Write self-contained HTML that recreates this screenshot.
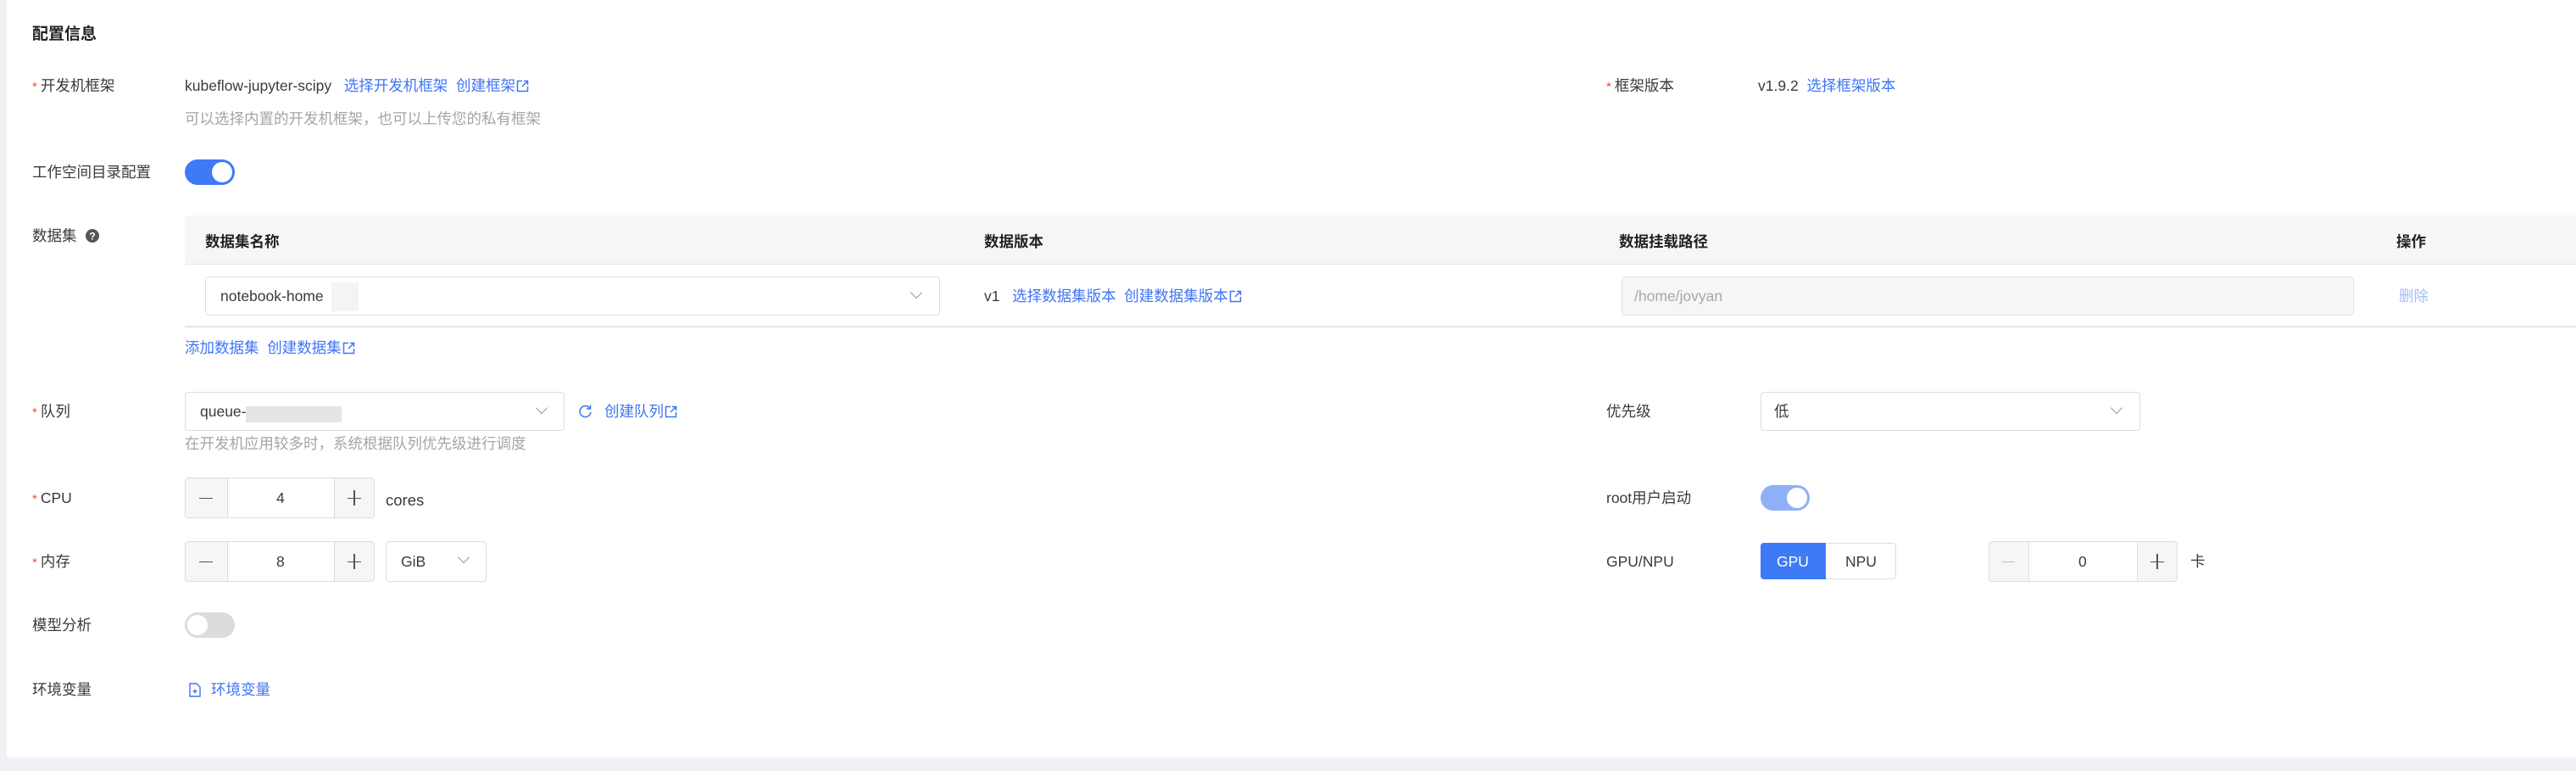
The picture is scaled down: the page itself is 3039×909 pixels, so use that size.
<!DOCTYPE html>
<html><head><meta charset="utf-8"><style>
*{margin:0;padding:0;box-sizing:border-box}
body{width:3039px;height:909px;background:#fff;position:relative;overflow:hidden;font-family:"Liberation Sans","Noto Sans CJK SC",sans-serif;color:#3a3a3a;font-size:17.5px}
.t{position:absolute;white-space:nowrap;line-height:24px}
.req{color:#f5483b;font-size:15px;margin-right:4px}
.lk{color:#3f75f3}
.g{color:#9a9a9a}
.box{position:absolute;border:1.5px solid #dcdde0;border-radius:4px;background:#fff}
.chev{position:absolute;width:10px;height:10px;border-right:1.3px solid #999;border-bottom:1.3px solid #999;transform:rotate(45deg)}
.ext{display:inline-block;vertical-align:-2px;margin-left:1px}
.tg{position:absolute;border-radius:15px}
.tg i{position:absolute;top:3px;width:24px;height:24px;border-radius:50%;background:#fff}
.h{position:absolute;height:1.2px;width:16px;background:#555}
.v{position:absolute;width:1.2px;height:18px;background:#555}
</style></head><body>
<div style="position:absolute;left:0;top:0;width:8px;height:909px;background:#f0f1f4"></div>
<div style="position:absolute;left:0;top:893px;width:3039px;height:16px;background:#f0f1f4"></div>

<div class="t" style="left:38px;top:29px;font-size:19px;font-weight:bold;color:#222">配置信息</div>

<div class="t" style="left:38px;top:89px"><span class="req">*</span>开发机框架</div>
<div class="t" style="left:218px;top:89px">kubeflow-jupyter-scipy&nbsp;&nbsp;&nbsp;<span class="lk">选择开发机框架&nbsp;&nbsp;创建框架<svg class="ext" width="15" height="15" viewBox="0 0 15 15" fill="none" stroke="#3f75f3" stroke-width="1.5"><path d="M7 1.5H1.5v12h12V8M9 1.5h4.5V6M13.5 1.5L7 8"/></svg></span></div>
<div class="t g" style="left:218px;top:128px;color:#a5a5a5">可以选择内置的开发机框架，也可以上传您的私有框架</div>

<div class="t" style="left:1895px;top:89px"><span class="req">*</span>框架版本</div>
<div class="t" style="left:2074px;top:89px">v1.9.2&nbsp;&nbsp;<span class="lk">选择框架版本</span></div>

<div class="t" style="left:38px;top:191px">工作空间目录配置</div>
<div class="tg" style="left:218px;top:188px;width:59px;height:30px;background:#3f7af6"><i style="left:32px"></i></div>

<div class="t" style="left:38px;top:266px">数据集 <svg width="16" height="16" viewBox="0 0 16 16" style="vertical-align:-2px;margin-left:6px"><circle cx="8" cy="8" r="8" fill="#555"/><text x="8" y="12.5" font-size="12" font-weight="bold" text-anchor="middle" fill="#fff" font-family="Liberation Sans">?</text></svg></div>

<div style="position:absolute;left:218px;top:254px;width:2821px;height:58px;background:#f5f6f8;border-bottom:1.5px solid #e3e4e8"></div>
<div class="t" style="left:242px;top:273px;font-weight:bold;color:#222">数据集名称</div>
<div class="t" style="left:1161px;top:273px;font-weight:bold;color:#222">数据版本</div>
<div class="t" style="left:1910px;top:273px;font-weight:bold;color:#222">数据挂载路径</div>
<div class="t" style="left:2827px;top:273px;font-weight:bold;color:#222">操作</div>
<div style="position:absolute;left:218px;top:384px;width:2821px;height:1.5px;background:#e3e4e8"></div>

<div class="box" style="left:242px;top:326px;width:867px;height:46px"></div>
<div class="t" style="left:260px;top:337px">notebook-home</div>
<div style="position:absolute;left:391px;top:333px;width:32px;height:34px;background:#f4f4f4"></div>
<div class="chev" style="left:1076px;top:340px"></div>
<div class="t" style="left:1161px;top:337px">v1&nbsp;&nbsp;&nbsp;<span class="lk">选择数据集版本&nbsp;&nbsp;创建数据集版本<svg class="ext" width="15" height="15" viewBox="0 0 15 15" fill="none" stroke="#3f75f3" stroke-width="1.5"><path d="M7 1.5H1.5v12h12V8M9 1.5h4.5V6M13.5 1.5L7 8"/></svg></span></div>
<div class="box" style="left:1913px;top:326px;width:864px;height:46px;background:#f5f6f8;border-color:#e3e4e8"></div>
<div class="t" style="left:1928px;top:337px;color:#a8a8a8">/home/jovyan</div>
<div class="t" style="left:2830px;top:337px;color:#a3befa">删除</div>

<div class="t lk" style="left:218px;top:398px">添加数据集&nbsp;&nbsp;创建数据集<svg class="ext" width="15" height="15" viewBox="0 0 15 15" fill="none" stroke="#3f75f3" stroke-width="1.5"><path d="M7 1.5H1.5v12h12V8M9 1.5h4.5V6M13.5 1.5L7 8"/></svg></div>

<div class="t" style="left:38px;top:473px"><span class="req">*</span>队列</div>
<div class="box" style="left:218px;top:462px;width:448px;height:46px"></div>
<div class="t" style="left:236px;top:473px">queue-</div>
<div style="position:absolute;left:290px;top:479px;width:113px;height:19px;background:#e4e4e4"></div>
<div class="chev" style="left:634px;top:476px"></div>
<svg style="position:absolute;left:682px;top:476px" width="17" height="18" viewBox="0 0 17 18" fill="none" stroke="#3f75f3" stroke-width="1.5"><path d="M14 5.5A6.5 6.5 0 1 0 15 10"/><path d="M14.5 1.5v4.5h-4.5"/></svg>
<div class="t lk" style="left:713px;top:473px">创建队列<svg class="ext" width="15" height="15" viewBox="0 0 15 15" fill="none" stroke="#3f75f3" stroke-width="1.5"><path d="M7 1.5H1.5v12h12V8M9 1.5h4.5V6M13.5 1.5L7 8"/></svg></div>
<div class="t" style="left:218px;top:511px;color:#a5a5a5">在开发机应用较多时，系统根据队列优先级进行调度</div>

<div class="t" style="left:1895px;top:473px">优先级</div>
<div class="box" style="left:2077px;top:462px;width:448px;height:46px"></div>
<div class="t" style="left:2093px;top:473px">低</div>
<div class="chev" style="left:2492px;top:476px"></div>

<div class="t" style="left:38px;top:575px"><span class="req">*</span>CPU</div>
<div class="box" style="left:218px;top:563px;width:224px;height:48px;background:#f5f6f8"></div>
<div style="position:absolute;left:268px;top:564px;width:127px;height:46px;background:#fff;border-left:1.5px solid #dcdde0;border-right:1.5px solid #dcdde0"></div>
<div class="h" style="left:235px;top:587px"></div>
<div class="t" style="left:326px;top:575px">4</div>
<div class="h" style="left:410px;top:587px"></div>
<div class="v" style="left:417.4px;top:578px"></div>
<div class="t" style="left:455px;top:578px;font-size:18.5px">cores</div>

<div class="t" style="left:1895px;top:575px">root用户启动</div>
<div class="tg" style="left:2077px;top:572px;width:58px;height:30px;background:#8fb0f8"><i style="left:31px"></i></div>

<div class="t" style="left:38px;top:650px"><span class="req">*</span>内存</div>
<div class="box" style="left:218px;top:638px;width:224px;height:48px;background:#f5f6f8"></div>
<div style="position:absolute;left:268px;top:639px;width:127px;height:46px;background:#fff;border-left:1.5px solid #dcdde0;border-right:1.5px solid #dcdde0"></div>
<div class="h" style="left:235px;top:662px"></div>
<div class="t" style="left:326px;top:650px">8</div>
<div class="h" style="left:410px;top:662px"></div>
<div class="v" style="left:417.4px;top:653px"></div>
<div class="box" style="left:455px;top:638px;width:119px;height:48px"></div>
<div class="t" style="left:473px;top:650px">GiB</div>
<div class="chev" style="left:542px;top:652px"></div>

<div class="t" style="left:1895px;top:650px">GPU/NPU</div>
<div class="box" style="left:2077px;top:640px;width:160px;height:43px"></div>
<div style="position:absolute;left:2077px;top:640px;width:77px;height:43px;background:#3f7af6;border-radius:4px 0 0 4px"></div>
<div class="t" style="left:2096px;top:650px;color:#fff">GPU</div>
<div class="t" style="left:2177px;top:650px">NPU</div>
<div class="box" style="left:2346px;top:638px;width:223px;height:48px;background:#f5f6f8"></div>
<div style="position:absolute;left:2393px;top:639px;width:129px;height:46px;background:#fff;border-left:1.5px solid #dcdde0;border-right:1.5px solid #dcdde0"></div>
<div class="h" style="left:2362px;top:662px;width:15px;background:#bbb"></div>
<div class="t" style="left:2452px;top:650px">0</div>
<div class="h" style="left:2537px;top:662px"></div>
<div class="v" style="left:2544.4px;top:653px"></div>
<div class="t" style="left:2584px;top:650px">卡</div>

<div class="t" style="left:38px;top:725px">模型分析</div>
<div class="tg" style="left:218px;top:722px;width:59px;height:30px;background:#dcdcdc"><i style="left:3px"></i></div>

<div class="t" style="left:38px;top:801px">环境变量</div>
<svg style="position:absolute;left:223px;top:805px" width="14" height="17" viewBox="0 0 14 17" fill="none" stroke="#3f75f3" stroke-width="1.4"><path d="M1 1h8l4 4v11H1z"/><path d="M4.5 10h5M7 7.5v5"/></svg>
<div class="t lk" style="left:249px;top:801px">环境变量</div>
</body></html>
